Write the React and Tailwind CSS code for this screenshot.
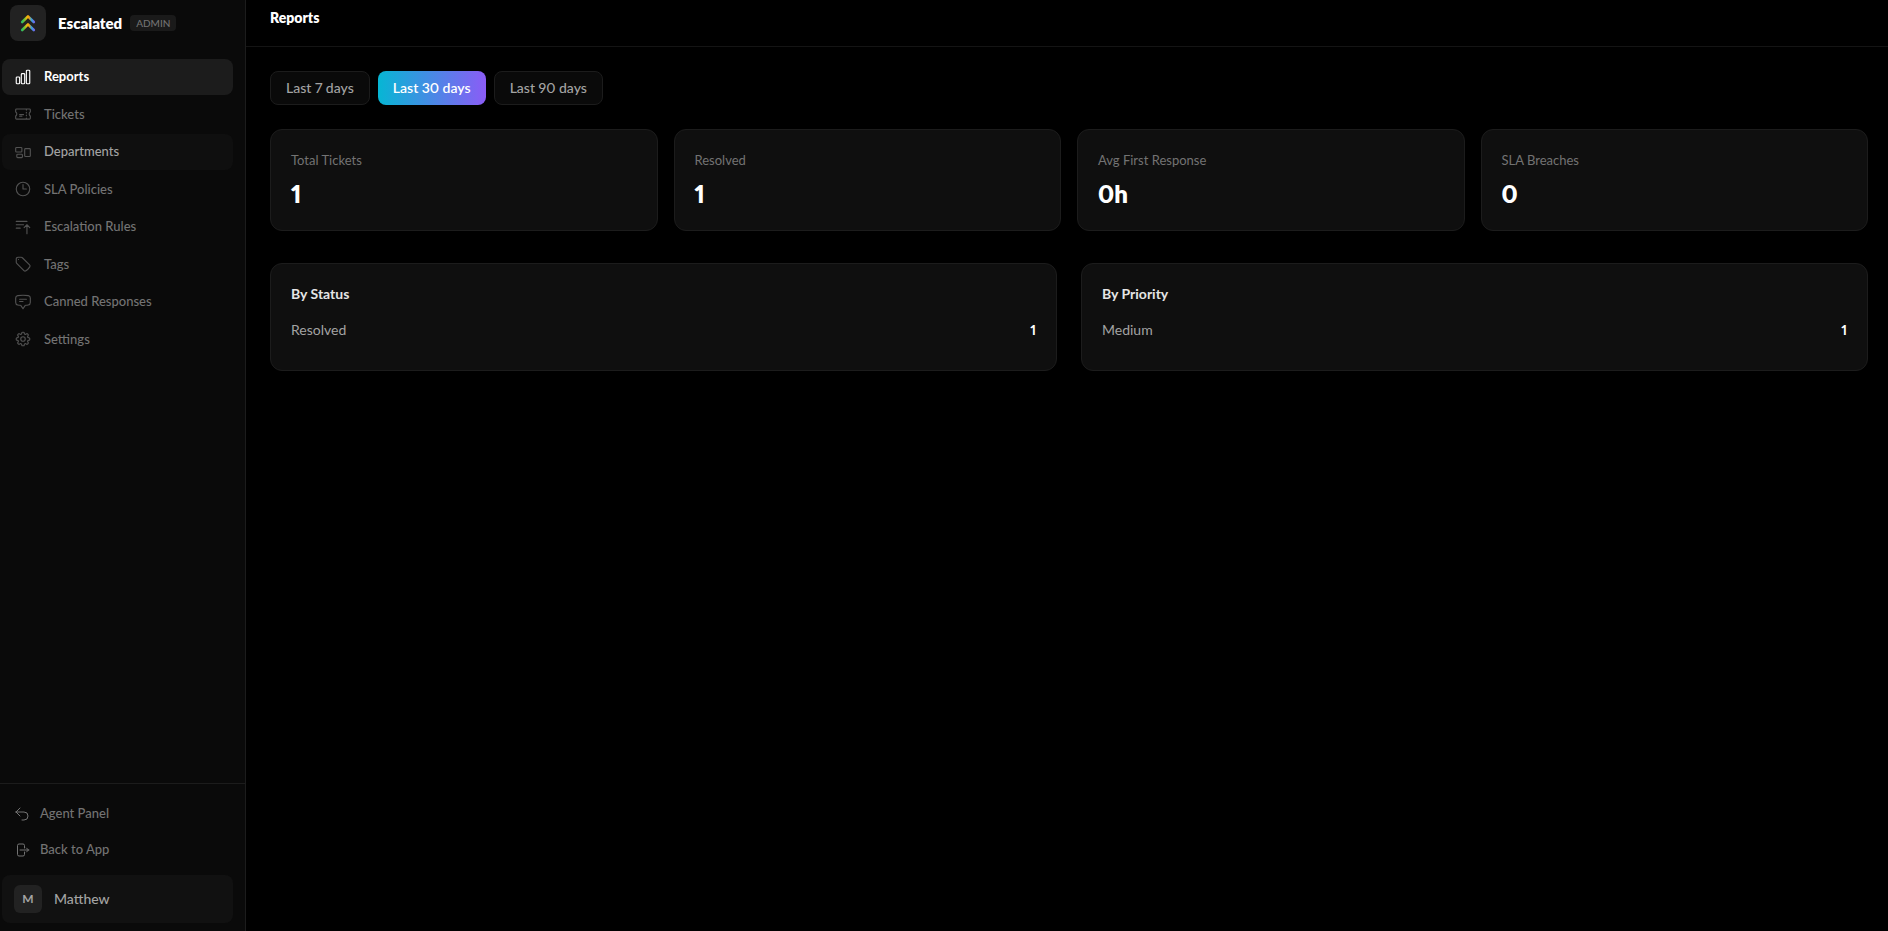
import {
  HiOutlineChartBar,
  HiOutlineTicket,
  HiOutlineRectangleGroup,
  HiOutlineClock,
  HiOutlineBarsArrowUp,
  HiOutlineTag,
  HiOutlineChatBubbleBottomCenterText,
  HiOutlineCog8Tooth,
  HiOutlineArrowUturnLeft,
  HiOutlineArrowRightOnRectangle,
} from 'react-icons/hi2';

const navItems = [
  { label: 'Reports', icon: HiOutlineChartBar, state: 'active' },
  { label: 'Tickets', icon: HiOutlineTicket },
  { label: 'Departments', icon: HiOutlineRectangleGroup, state: 'hover' },
  { label: 'SLA Policies', icon: HiOutlineClock },
  { label: 'Escalation Rules', icon: HiOutlineBarsArrowUp },
  { label: 'Tags', icon: HiOutlineTag },
  { label: 'Canned Responses', icon: HiOutlineChatBubbleBottomCenterText },
  { label: 'Settings', icon: HiOutlineCog8Tooth },
];

const stats = [
  { label: 'Total Tickets', value: '1' },
  { label: 'Resolved', value: '1' },
  { label: 'Avg First Response', value: '0h' },
  { label: 'SLA Breaches', value: '0' },
];

const breakdowns = [
  { title: 'By Status', rows: [{ name: 'Resolved', count: 1 }] },
  { title: 'By Priority', rows: [{ name: 'Medium', count: 1 }] },
];

function navStyle(state) {
  if (state === 'active') return 'bg-[#1c1c1c] text-white font-bold';
  if (state === 'hover') return 'bg-[#0f0f0f] text-[#a3a3a3] font-medium';
  return 'text-[#737373] font-medium';
}

function Logo() {
  return (
    <svg className="size-5" viewBox="0 0 20 20" fill="none" aria-hidden="true">
      <defs>
        <linearGradient id="logo" gradientUnits="userSpaceOnUse" x1="3" y1="10" x2="17" y2="10">
          <stop offset="0" stopColor="#22b573" />
          <stop offset="0.22" stopColor="#5cc83a" />
          <stop offset="0.42" stopColor="#f5b70b" />
          <stop offset="0.58" stopColor="#f59e0b" />
          <stop offset="0.74" stopColor="#38a5d8" />
          <stop offset="1" stopColor="#7c5cf6" />
        </linearGradient>
      </defs>
      <g stroke="url(#logo)" strokeWidth="2.6" strokeLinecap="round" strokeLinejoin="round">
        <path d="M4.2 9 10 3.4 15.8 9" />
        <path d="M4.2 17 10 11.4 15.8 17" />
      </g>
    </svg>
  );
}

function Sidebar() {
  return (
    <aside className="flex w-[246px] shrink-0 flex-col border-r border-[#1c1c1c] bg-[#0a0a0a]">
      <div className="flex h-[46px] items-center pl-2.5">
        <div className="flex size-9 items-center justify-center rounded-lg bg-[#222222]">
          <Logo />
        </div>
        <span className="ml-3 text-[15px] font-extrabold text-white">Escalated</span>
        <span className="ml-2 rounded bg-[#1a1a1a] px-1.5 text-[10px] leading-4 font-medium text-[#737373]">
          ADMIN
        </span>
      </div>

      <nav className="mt-[13px] flex flex-1 flex-col gap-0.5 pr-3 pl-0.5">
        {navItems.map(({ label, icon: Icon, state }) => (
          <a
            key={label}
            href="#"
            className={`flex items-center gap-3 rounded-lg px-3 py-2 text-[13px] leading-normal ${navStyle(state)}`}
          >
            <Icon className={`size-[18px] ${state === 'active' ? '' : 'text-[#525252]'}`} />
            {label}
          </a>
        ))}
      </nav>

      <div className="border-t border-[#1c1c1c] pt-3 pr-3 pb-2 pl-0.5 text-[#737373]">
        <a href="#" className="flex h-9 items-center gap-2.5 px-3 text-[13px] font-medium">
          <HiOutlineArrowUturnLeft className="size-4" />
          Agent Panel
        </a>
        <a href="#" className="flex h-9 items-center gap-2.5 px-3 text-[13px] font-medium">
          <HiOutlineArrowRightOnRectangle className="size-4" />
          Back to App
        </a>
        <button
          type="button"
          className="mt-[7px] flex h-12 w-full items-center gap-3 rounded-lg bg-[#111111] px-3 text-sm font-medium text-[#a3a3a3]"
        >
          <span className="flex size-7 items-center justify-center rounded-md bg-[#222222] text-xs font-bold">
            M
          </span>
          Matthew
        </button>
      </div>
    </aside>
  );
}

function RangeButton({ children, active }) {
  return (
    <button
      type="button"
      aria-pressed={Boolean(active)}
      className={`h-[34px] rounded-lg text-sm ${
        active
          ? 'bg-linear-to-r/srgb from-[#06b6d4] to-[#8b5cf6] px-[15px] font-semibold text-white'
          : 'border border-[#1c1c1c] bg-[#0a0a0a] px-[15px] font-medium text-[#a3a3a3]'
      }`}
    >
      {children}
    </button>
  );
}

export default function App() {
  return (
    <div className="flex min-h-screen bg-black font-['Lato','Noto_Sans',sans-serif] proportional-nums">
      <Sidebar />
      <div className="min-w-0 flex-1">
        <header className="flex h-[47px] items-start border-b border-[#141414] px-6 pt-2">
          <h1 className="text-sm font-extrabold text-white">Reports</h1>
        </header>

        <main className="pt-6 pr-5 pl-6">
          <div className="flex gap-2">
            <RangeButton>Last 7 days</RangeButton>
            <RangeButton active>Last 30 days</RangeButton>
            <RangeButton>Last 90 days</RangeButton>
          </div>

          <section className="mt-6 grid grid-cols-4 gap-4">
            {stats.map(({ label, value }) => (
              <div key={label} className="h-[102px] rounded-xl border border-[#1c1c1c] bg-[#0f0f0f] p-5">
                <div className="text-[13px] leading-5 text-[#737373]">{label}</div>
                <div className="mt-2 text-2xl font-extrabold text-white">{value}</div>
              </div>
            ))}
          </section>

          <section className="mt-8 grid grid-cols-2 gap-6">
            {breakdowns.map(({ title, rows }) => (
              <div key={title} className="h-[108px] rounded-xl border border-[#1c1c1c] bg-[#0f0f0f] p-5">
                <h2 className="text-sm font-bold text-[#e5e5e5]">{title}</h2>
                <dl className="mt-4">
                  {rows.map(({ name, count }) => (
                    <div key={name} className="flex justify-between text-sm">
                      <dt className="text-[#a3a3a3]">{name}</dt>
                      <dd className="font-bold text-white">{count}</dd>
                    </div>
                  ))}
                </dl>
              </div>
            ))}
          </section>
        </main>
      </div>
    </div>
  );
}
